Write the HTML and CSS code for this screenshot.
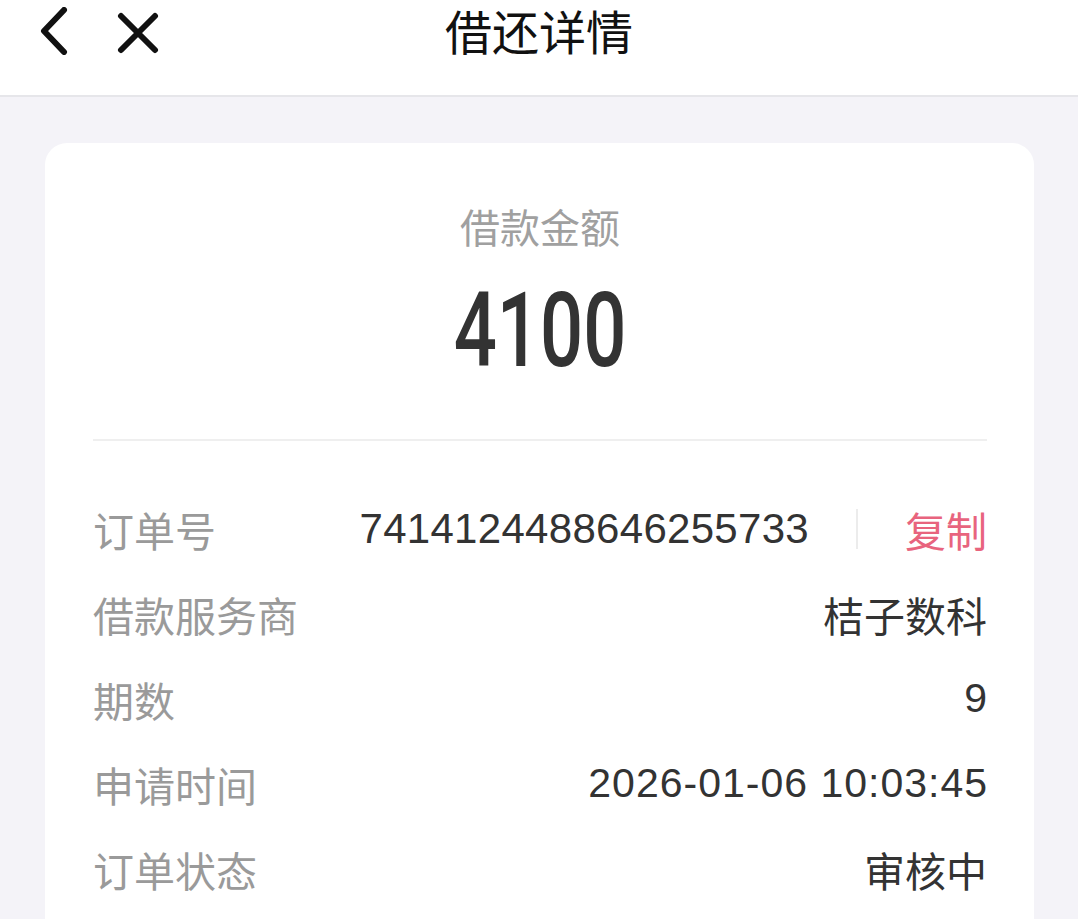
FILE: index.html
```html
<!DOCTYPE html>
<html>
<head>
<meta charset="utf-8" />
<title>借还详情</title>
<link rel="stylesheet" href="styles.css">
</head>
<body>

<div class="navBar">
  <div class="navIcons">
    <svg class="navIcon" width="30" height="48" viewBox="0 0 30 48">
      <path d="M25 3 L5 24 L25 45" fill="none" stroke="#111" stroke-width="6" stroke-linecap="round" stroke-linejoin="round"/>
    </svg>
    <svg class="navIcon closeIcon" width="42" height="42" viewBox="0 0 42 42">
      <path d="M4 4 L38 38 M38 4 L4 38" fill="none" stroke="#111" stroke-width="6" stroke-linecap="round"/>
    </svg>
  </div>
  <div class="navTitle">借还详情</div>
</div>

<div class="page">
  <div class="card">
    <div class="amountBox">
      <div class="amountLabel">借款金额</div>
      <div class="amountValue">4100</div>
    </div>
    <div class="infoList">
      <div class="infoRow">
        <span class="label">订单号</span>
        <span class="value">
          <span class="orderNo">7414124488646255733</span>
          <span class="sep"></span>
          <span class="copyBtn">复制</span>
        </span>
      </div>
      <div class="infoRow">
        <span class="label">借款服务商</span>
        <span class="value">桔子数科</span>
      </div>
      <div class="infoRow">
        <span class="label">期数</span>
        <span class="value">9</span>
      </div>
      <div class="infoRow">
        <span class="label">申请时间</span>
        <span class="value dateText">2026-01-06 10:03:45</span>
      </div>
      <div class="infoRow">
        <span class="label">订单状态</span>
        <span class="value">审核中</span>
      </div>
    </div>
  </div>
</div>

</body>
</html>
```

FILE: styles.css
```css
html, body {
  margin: 0; padding: 0; height: 100%;
  background: #f4f3f8;
  overflow: hidden;
  font-family: "Liberation Sans", "Noto Sans CJK SC", sans-serif;
  color: #333;
}
.navBar {
  position: relative;
  height: 95px;
  background: white;
  border-bottom: 2px solid #e6e6ea;
  display: flex;
  align-items: center;
  justify-content: center;
}
.navIcons {
  position: absolute;
  left: 39px;
  top: 7px;
  display: flex;
  align-items: center;
  gap: 48px;
}
.closeIcon {
  margin-top: 4px;
}
.navTitle {
  font-size: 47px;
  color: #111;
  margin-top: -36px;
}
.page {
  padding: 46px 44px 0 45px;
}
.card {
  background: white;
  border-radius: 22px;
  padding: 0 47px 40px 48px;
  height: 900px;
}
.amountBox {
  text-align: center;
  border-bottom: 2px solid #efefef;
  padding-top: 58px;
  height: 298px;
  box-sizing: border-box;
}
.amountLabel {
  font-size: 40px;
  color: #a0a0a0;
  line-height: 56px;
}
.amountValue {
  font-family: Roboto, "Liberation Sans", sans-serif;
  font-weight: 500;
  font-size: 104px;
  color: #333;
  line-height: 120px;
  margin-top: 14px;
  transform: scaleX(0.73);
}
.infoList {
  padding-top: 45px;
}
.infoRow {
  display: flex;
  justify-content: space-between;
  align-items: center;
  height: 85px;
  font-size: 41px;
}
.label {
  color: #9a9a9a;
}
.value {
  color: #333;
  display: flex;
  align-items: center;
}
.dateText {
  letter-spacing: 1px;
  margin-right: -1px;
}
.orderNo {
  font-size: 42px;
  letter-spacing: 0.3px;
}
.sep {
  width: 2px;
  height: 40px;
  background: #ececec;
  margin: 0 47px 0 47px;
}
.copyBtn {
  color: #e8647e;
}
```
